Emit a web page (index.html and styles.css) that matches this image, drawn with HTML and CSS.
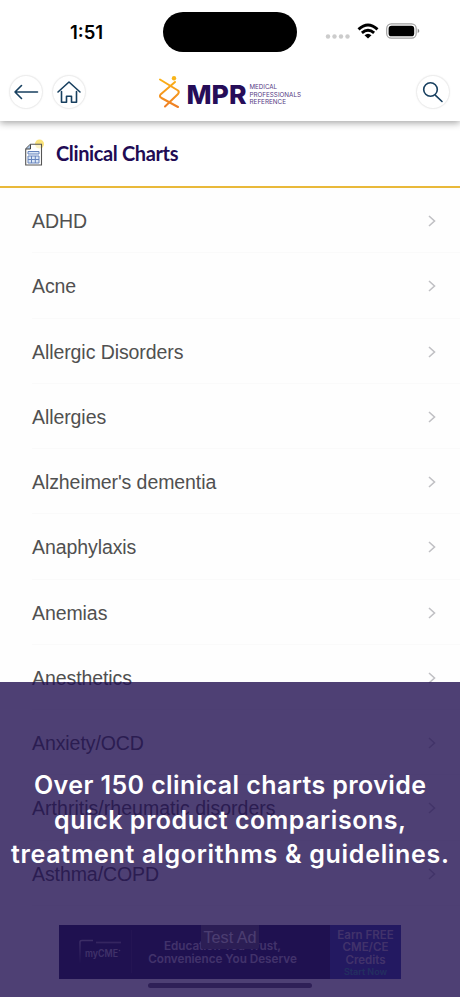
FILE: index.html
```html
<!DOCTYPE html>
<html lang="en">
<head>
<meta charset="utf-8">
<title>Clinical Charts</title>
<link rel="stylesheet" href="styles.css">
</head>
<body>
<div class="screen">
  <header class="top">
    <div class="status">
      <div class="time">1:51</div>
      <div class="island"></div>
      <svg class="signals" width="100" height="24" viewBox="0 0 100 24">
        <g fill="#ccc"><circle cx="6" cy="16.500" r="2.200"/><circle cx="12.500" cy="16.500" r="2.200"/><circle cx="19" cy="16.500" r="2.200"/><circle cx="25.500" cy="16.500" r="2.200"/></g>
        <g fill="none" stroke="#000" stroke-width="2.900"><path d="M36.500 9.300Q46 .8 55.500 9.300"/><path d="M39.900 12.800Q46 7.500 52.100 12.800"/></g>
        <path d="M42.500 15.300Q46 12.300 49.500 15.300L46 18.600Z"/>
        <rect x="64.700" y="3.800" width="29.500" height="14.400" rx="4.600" fill="#fff" stroke="#a0a0a0" stroke-width="1.200"/>
        <rect x="66.600" y="5.800" width="25.600" height="10.500" rx="2.900"/>
        <path d="M95.700 8.500Q99 10.900 95.700 13.300Z" fill="#888"/>
      </svg>
    </div>
    <nav class="nav">
      <div class="round back"><svg width="32" height="32" viewBox="1 1 32 32"><path d="M28.500 17H6M12.500 10.500L6 17l6.500 6.500"/></svg></div>
      <div class="round"><svg width="32" height="32" viewBox="1 1 32 32"><path d="M6 17L17 7l11 10M9.500 16.500v10.700h5v-6h5v6h5V16.500"/></svg></div>
      <svg class="logo" width="146" height="36" viewBox="0 0 146 36">
        <defs><linearGradient id="g" gradientUnits="userSpaceOnUse" x1="0" y1="2" x2="0" y2="34"><stop offset="0" stop-color="#fdb813"/><stop offset="1" stop-color="#ee7c25"/></linearGradient></defs>
        <g fill="none" stroke="url(#g)" stroke-width="2" stroke-linecap="round" stroke-linejoin="round"><path d="M2 5.500L20 16.500Q21.500 18 20 20L7 32.500"/><path d="M17 8L2.500 20.500Q1 22.500 3.500 24L20 33"/></g>
        <circle cx="16" cy="4.200" r="2.200" fill="#f8b51a"/>
        <text class="mpr" x="28.500" y="29.500" textLength="60" lengthAdjust="spacingAndGlyphs">MPR</text>
        <g class="tag"><text x="91.500" y="15.100" textLength="27.500" lengthAdjust="spacingAndGlyphs">MEDICAL</text><text x="91.500" y="22.700" textLength="51.500" lengthAdjust="spacingAndGlyphs">PROFESSIONALS</text><text x="91.500" y="30" textLength="36.500" lengthAdjust="spacingAndGlyphs">REFERENCE</text></g>
      </svg>
      <div class="round search"><svg width="32" height="32" viewBox="1 1 32 32"><circle cx="14.500" cy="14.500" r="6.800"/><path d="M19.500 20.300L26 26.500"/></svg></div>
    </nav>
  </header>
  <div class="title">
    <svg width="24" height="30" viewBox="0 0 24 30">
      <circle cx="15.500" cy="6" r="4.500" fill="#fae37c"/>
      <path d="M6.500 6.200H17.500V27H1.700V11Z" fill="#fff" fill-opacity=".6" stroke="#555" stroke-width="1.100"/>
      <path d="M6.500 6.500V11H2" fill="#a9c4e4" stroke="#444"/>
      <path d="M4 13.500h11v2.500H4zM4 18h11v7H4zM7.500 18v7M11.300 18v7M4 21.500h11" fill="#dce8f7" stroke="#6684bd"/>
    </svg>
    <h1>Clinical Charts</h1>
  </div>
  <ul class="list">
    <li><span>ADHD</span><svg class="chev" viewBox="0 0 8 12"><path d="M1 1l5.500 5L1 11"/></svg></li>
    <li><span>Acne</span><svg class="chev" viewBox="0 0 8 12"><path d="M1 1l5.500 5L1 11"/></svg></li>
    <li><span>Allergic Disorders</span><svg class="chev" viewBox="0 0 8 12"><path d="M1 1l5.500 5L1 11"/></svg></li>
    <li><span>Allergies</span><svg class="chev" viewBox="0 0 8 12"><path d="M1 1l5.500 5L1 11"/></svg></li>
    <li><span>Alzheimer's dementia</span><svg class="chev" viewBox="0 0 8 12"><path d="M1 1l5.500 5L1 11"/></svg></li>
    <li><span>Anaphylaxis</span><svg class="chev" viewBox="0 0 8 12"><path d="M1 1l5.500 5L1 11"/></svg></li>
    <li><span>Anemias</span><svg class="chev" viewBox="0 0 8 12"><path d="M1 1l5.500 5L1 11"/></svg></li>
    <li><span>Anesthetics</span><svg class="chev" viewBox="0 0 8 12"><path d="M1 1l5.500 5L1 11"/></svg></li>
    <li><span>Anxiety/OCD</span><svg class="chev" viewBox="0 0 8 12"><path d="M1 1l5.500 5L1 11"/></svg></li>
    <li><span class="wide">Arthritis/rheumatic disorders</span><svg class="chev" viewBox="0 0 8 12"><path d="M1 1l5.500 5L1 11"/></svg></li>
    <li><span>Asthma/COPD</span><svg class="chev" viewBox="0 0 8 12"><path d="M1 1l5.500 5L1 11"/></svg></li>
  </ul>
  <footer class="foot">
    <div class="ad">
      <svg class="brand" width="73" height="54" viewBox="0 0 73 54"><defs><linearGradient id="fade" gradientUnits="userSpaceOnUse" x1="0" y1="15" x2="0" y2="39"><stop stop-color="#aaa6bc"/><stop offset="1" stop-color="#14144b"/></linearGradient></defs><path d="M21 39V17q0-1.500 2-1.500H34" fill="none" stroke="url(#fade)" stroke-width="1.500"/><path d="M37 17.500H62" stroke="#817b9d" stroke-width="1.700"/><text x="26" y="31.500" textLength="33" lengthAdjust="spacingAndGlyphs">myCME</text><circle cx="60.500" cy="25.500" r=".8" fill="#aaa"/><path d="M72.500 5v43" stroke="#37325d" stroke-width=".8"/></svg>
      <div class="slogan">Education You Trust,<br>Convenience You Deserve</div>
      <div class="offer">Earn FREE<br>CME/CE<br>Credits<div class="start">Start Now</div></div>
      <div class="test">Test Ad</div>
    </div>
    <div class="homebar"></div>
  </footer>
  <div class="overlay">
    <svg class="promo" width="460" height="120" viewBox="0 0 460 120">
      <text x="34" y="34" textLength="392">Over 150 clinical charts provide</text>
      <text x="54" y="68.500" textLength="352">quick product comparisons,</text>
      <text x="11" y="103" textLength="438">treatment algorithms &amp; guidelines.</text>
    </svg>
  </div>
</div>
</body>
</html>
```
FILE: styles.css
```css
* { box-sizing: border-box; }
body { margin: 0; background: #fff; font-family: "Liberation Sans", Arial, sans-serif; }
.screen { position: relative; width: 460px; height: 997px; overflow: hidden; background: #fefefe; display: flex; flex-direction: column; }
.top { height: 121px; flex: none; background: #fff; box-shadow: 0 2px 7px rgba(0,0,0,.36); z-index: 1; }
.status { height: 63px; display: grid; grid-template-columns: 163px 134px 163px; align-items: center; }
.time { font: 600 18.5px/24px Inter, sans-serif; text-align: center; padding-left: 10px; }
.island { height: 40px; border-radius: 20px; background: #000; }
.signals { margin-left: 25px; }
.nav { height: 58px; display: flex; align-items: center; padding: 0 11px 0 10px; }
.round { width: 32px; height: 32px; border-radius: 50%; box-shadow: 0 0 0 1px #eee, 0 0 3px #e6e6e6; }
.round svg { display: block; fill: none; stroke: #173f5f; stroke-width: 1.6; stroke-linecap: round; stroke-linejoin: round; }
.back { margin-right: 11px; }
.logo { margin-left: 73px; overflow: visible; }
.search { margin-left: auto; }
.mpr { font: 800 26px Inter, sans-serif; fill: #260d58; }
.tag { font: 400 6.3px Inter, sans-serif; fill: #553984; }
.title { height: 67px; flex: none; display: flex; align-items: center; padding: 0 24px 1px; border-bottom: 2px solid #e9b93a; background: #fff; }
h1 { margin: 0 0 0 8px; font: 700 20px/26px Lato, sans-serif; letter-spacing: -.37px; color: #210b54; }
.list { margin: 0; padding: 0 0 0 32px; list-style: none; flex: none; }
.list li { height: 65.25px; display: flex; align-items: center; justify-content: space-between; padding: 2px 24px 0 0; border-bottom: 1px solid #fafafa; color: #505050; font-size: 19.5px; letter-spacing: -.08px; }
.list span { padding-top: 1px; }
.list .wide { letter-spacing: .03px; }
.chev { width: 8px; height: 12px; fill: none; stroke: #c0c0c4; stroke-width: 1.6; }
.foot { position: absolute; left: 0; right: 0; bottom: 0; height: 72px; display: flex; flex-direction: column; align-items: center; }
.ad { position: relative; width: 342px; height: 54px; display: flex; background: #14144b; color: #c0bbd0; font: 600 11.7px/13.4px Inter, sans-serif; text-align: center; }
.brand { flex: none; }
.brand text { font: 600 10px Inter, sans-serif; fill: #b7b2c7; }
.slogan { flex: 1; padding: 15px 16px 0 0; margin-left: -1px; white-space: nowrap; }
.offer { flex: none; width: 71px; background: #283ca0; font-size: 11.5px; line-height: 12.3px; padding-top: 4px; }
.start { color: #28a99c; font-size: 9px; }
.test { position: absolute; left: 142px; top: 0; width: 58px; height: 24px; border-radius: 0 0 2px 2px; background: #585463; color: #eee; font: 16.2px/25px "Liberation Sans", sans-serif; }
.homebar { width: 164px; height: 5px; margin-top: 4px; border-radius: 3px; background: #645f70; }
.overlay { position: absolute; left: 0; right: 0; top: 682px; bottom: 0; background: rgba(34,16,81,.8); padding-top: 78px; }
.promo { display: block; }
.promo text { font: 600 25px Inter, sans-serif; fill: #fff; }
```
